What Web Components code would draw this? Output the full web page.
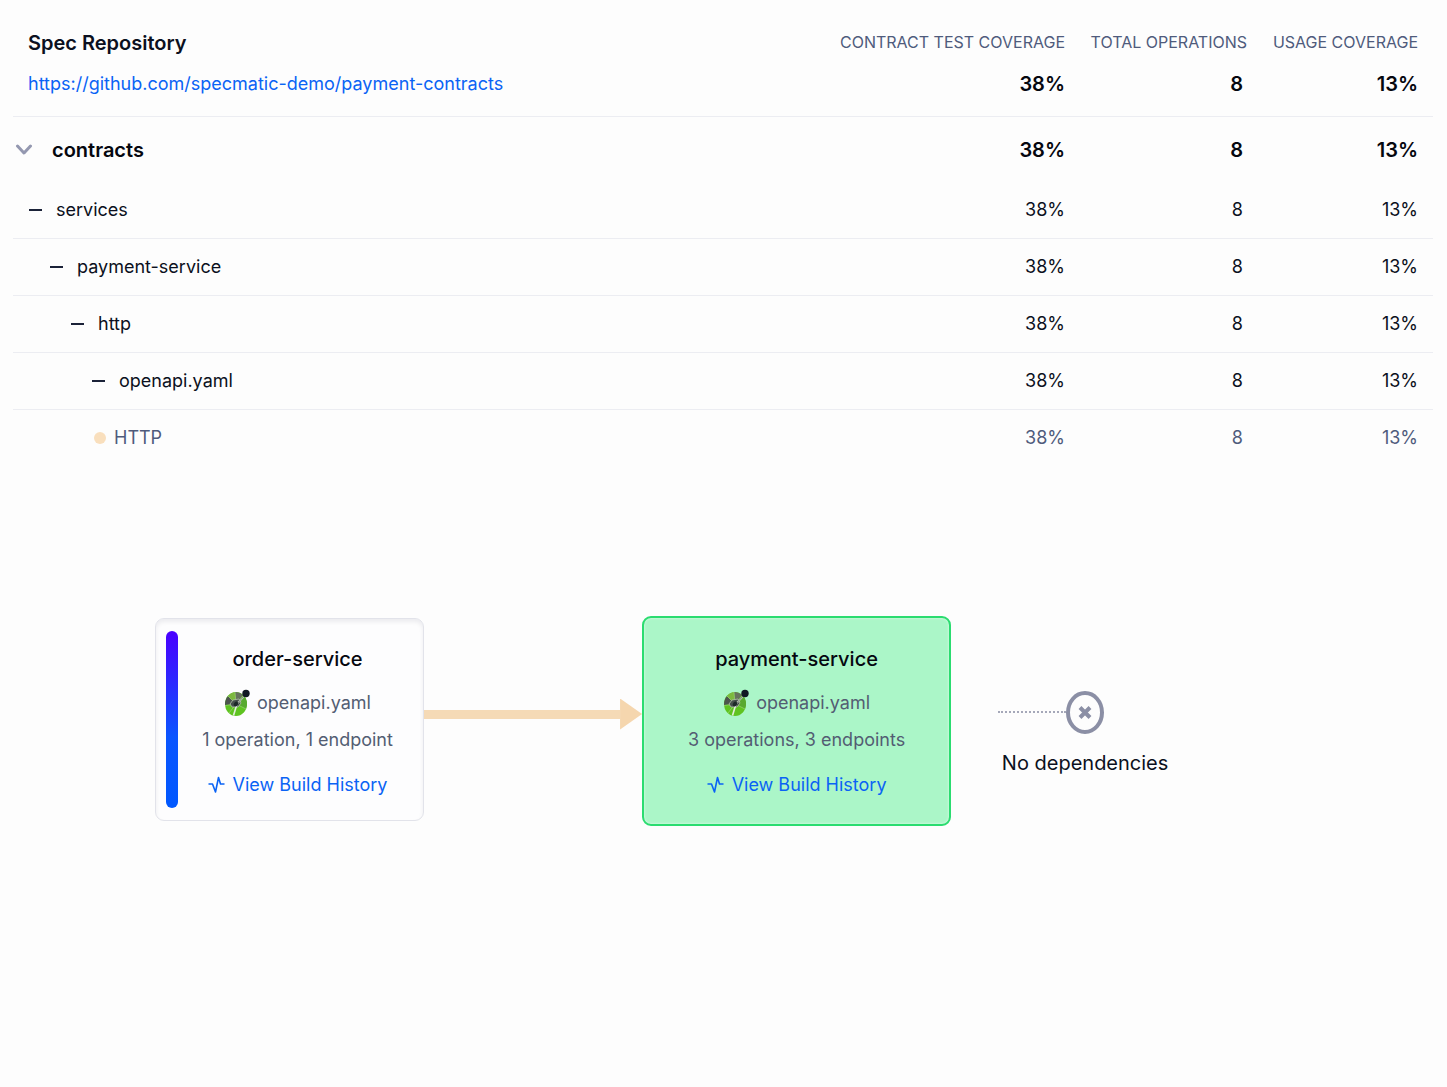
<!DOCTYPE html>
<html lang="en">
<head>
<meta charset="utf-8">
<meta name="viewport" content="width=device-width, initial-scale=1">
<title>Spec Repository</title>
<style>
  body {
    margin: 0;
    background-color: #fdfdfd;
    color: #0b1020;
    font-family: Inter, "Liberation Sans", sans-serif;
    font-size: 18px;
    line-height: 28px;
  }
</style>
</head>
<body>
<coverage-table
  heading="Spec Repository"
  url="https://github.com/specmatic-demo/payment-contracts"
  data-rows='[
    {"name": "contracts", "kind": "root"},
    {"name": "services", "kind": "dir", "level": 0},
    {"name": "payment-service", "kind": "dir", "level": 1},
    {"name": "http", "kind": "dir", "level": 2},
    {"name": "openapi.yaml", "kind": "dir", "level": 3},
    {"name": "HTTP", "kind": "protocol"}
  ]'></coverage-table>

<dependency-graph>
  <service-card accent>
    <span slot="name">order-service</span>
    <span slot="spec">openapi.yaml</span>
    <span slot="summary">1 operation, 1 endpoint</span>
  </service-card>
  <graph-arrow></graph-arrow>
  <service-card selected>
    <span slot="name">payment-service</span>
    <span slot="spec">openapi.yaml</span>
    <span slot="summary">3 operations, 3 endpoints</span>
  </service-card>
  <empty-dependencies>No dependencies</empty-dependencies>
</dependency-graph>

<script>
class CoverageTable extends HTMLElement {
  constructor() {
    super();
    this.attachShadow({ mode: 'open' });
  }

  connectedCallback() {
    this.render(JSON.parse(this.getAttribute('data-rows')));
  }

  marker(row) {
    if (row.kind === 'protocol') return '<span class="dot"></span>';
    if (row.kind === 'root') {
      return `<button type="button" aria-label="Collapse ${row.name}">
        <svg width="18" height="12" viewBox="0 0 18 12"><path d="M2.5 2 9 9 15.500 2" fill="none" stroke="#9498b0" stroke-width="3" stroke-linecap="round" stroke-linejoin="round"/></svg>
      </button>`;
    }
    return `<button type="button" aria-label="Collapse ${row.name}">
      <svg width="13" height="2" viewBox="0 0 13 2"><path d="M0 1h13" stroke="#1b2238" stroke-width="2"/></svg>
    </button>`;
  }

  render(rows) {
    const heading = this.getAttribute('heading');
    const url = this.getAttribute('url');

    this.shadowRoot.innerHTML = `
      <style>
        :host {
          display: block;
          padding: 0 14px 0 13px;
        }
        table {
          width: 100%;
          border-collapse: separate;
          border-spacing: 0;
        }
        th, td {
          box-sizing: border-box;
          height: 57px;
          padding: 0;
          text-align: right;
          font-weight: 400;
          white-space: nowrap;
          border-bottom: 1px solid #ecedf2;
        }
        th:first-child { text-align: left; }
        th:nth-child(2), td:nth-child(2) { width: 222px; }
        th:nth-child(3), td:nth-child(3) { width: 182px; }
        th:nth-child(4), td:nth-child(4) { width: 186px; padding-right: 15px; }
        td:nth-child(3) { padding-right: 4px; }

        .labels th {
          height: 64px;
          padding-top: 20px;
          border: 0;
          color: #4f5b7c;
          font-size: 16px;
        }
        .labels th:first-child {
          padding: 22px 0 0 15px;
          color: #0b1020;
          font-size: 20px;
          font-weight: 600;
        }
        .total th, .total td { height: 53px; padding-bottom: 12px; }
        .total th { padding-left: 15px; }
        .total td, .root th, .root td {
          color: #05070f;
          font-size: 20px;
          font-weight: 600;
        }
        .root th, .root td { height: 65px; border: 0; }
        .protocol th, .protocol td { height: 56px; border: 0; color: #4f5b7c; }

        a { color: #0a63f5; text-decoration: none; }

        .name {
          display: flex;
          align-items: center;
          gap: 14px;
          padding-left: calc(16px + var(--level, 0) * 21px);
        }
        .root .name { padding-left: 2px; gap: 19px; }
        .protocol .name { padding-left: 81px; gap: 8px; }

        button {
          display: flex;
          padding: 0;
          border: 0;
          background: none;
          cursor: pointer;
        }
        svg { display: block; }
        .dot {
          width: 12px;
          height: 12px;
          border-radius: 50%;
          background-color: #f9dfbd;
        }
      </style>
      <table>
        <thead>
          <tr class="labels">
            <th scope="col">${heading}</th>
            <th scope="col">CONTRACT TEST COVERAGE</th>
            <th scope="col">TOTAL OPERATIONS</th>
            <th scope="col">USAGE COVERAGE</th>
          </tr>
        </thead>
        <tbody>
          <tr class="total">
            <th scope="row"><a href="${url}">${url}</a></th>
            <td>38%</td>
            <td>8</td>
            <td>13%</td>
          </tr>
          ${rows.map((row) => `
            <tr class="${row.kind}">
              <th scope="row"><div class="name" style="--level: ${row.level || 0}">${this.marker(row)}<span>${row.name}</span></div></th>
              <td>38%</td>
              <td>8</td>
              <td>13%</td>
            </tr>`).join('')}
        </tbody>
      </table>
    `;
  }
}

class DependencyGraph extends HTMLElement {
  constructor() {
    super();
    this.attachShadow({ mode: 'open' }).innerHTML = `
      <style>
        :host {
          display: grid;
          grid-template-columns: 269px minmax(80px, 1fr) 309px 221px;
          align-items: center;
          margin-top: 150px;
          padding: 0 19% 48px 155px;
        }
      </style>
      <slot></slot>
    `;
  }
}

class ServiceCard extends HTMLElement {
  constructor() {
    super();
    this.attachShadow({ mode: 'open' }).innerHTML = `
      <style>
        :host {
          display: flex;
          box-sizing: border-box;
          margin-bottom: 4px;
          padding: 12px 10px;
          border: 1px solid #e2e3ea;
          border-radius: 9px;
          background-color: #fdfdfe;
          box-shadow: inset 0 3px 4px rgba(20, 20, 40, 0.07);
        }
        :host([selected]) {
          margin-bottom: 0;
          padding: 13px 10px 16px;
          border: 2px solid #2bdc70;
          background-color: #abf6c8;
          box-shadow: inset 0 0 2px 1px #c4f8d8;
        }
        .bar {
          display: none;
          width: 12px;
          border-radius: 6px;
          background: linear-gradient(#4a00ff, #0a55ff 60%, #0058ff);
        }
        :host([accent]) .bar { display: block; }
        .content {
          flex: 1;
          display: flex;
          flex-direction: column;
          align-items: center;
          padding: 14px 0 9px;
          color: #535d73;
        }
        :host([accent]) .content { padding-left: 4px; }
        .name {
          color: #05070f;
          font-size: 20px;
          font-weight: 500;
        }
        .spec {
          display: flex;
          align-items: center;
          gap: 7px;
          margin: 16px 0 9px;
        }
        a {
          display: flex;
          align-items: center;
          gap: 8px;
          margin-top: 17px;
          color: #0a63f5;
          text-decoration: none;
        }
        svg { display: block; }
      </style>
      <div class="bar"></div>
      <div class="content">
        <div class="name"><slot name="name"></slot></div>
        <div class="spec">
          <svg width="26" height="28" viewBox="0 0 26 28" aria-hidden="true">
            <ellipse cx="12" cy="15" rx="11" ry="12" fill="#5fc321"/>
            <path d="M12 15 1 16A11 12 0 0 1 4 7Z" fill="#4c544e"/>
            <path d="M12 15 4 7A11 12 0 0 1 11 3Z" fill="#7cb83f"/>
            <path d="M12 15 11 3A11 12 0 0 1 19 6Z" fill="#66725e"/>
            <path d="M12 15 20 7A11 12 0 0 1 22 20Z" fill="#58a930"/>
            <path d="M1 16.500 12 15 5 24M12 15 22 20M12 15 11 3M12 15 4 7" fill="none" stroke="#a5dc80" stroke-width="0.600"/>
            <path d="M8 18 6 15 9 11 15 10 17 14 14 18Z" fill="#46504c" stroke="#b4c4ac" stroke-width="0.800"/>
            <path d="M22 5 13 15 9.500 26.500" fill="none" stroke="#e4eedd" stroke-width="1.600"/>
            <path d="M22.300 4.500 12.500 15.500" stroke="#46504c" stroke-width="0.800"/>
            <ellipse cx="12" cy="15" rx="2.600" ry="2" transform="rotate(-45 12 15)" fill="#1d2929"/>
            <circle cx="22" cy="4.500" r="3.700" fill="#101923"/>
          </svg>
          <slot name="spec"></slot>
        </div>
        <slot name="summary"></slot>
        <a href="#history">
          <svg width="17" height="18" viewBox="0 0 17 18" aria-hidden="true">
            <path d="M.5 8H4.500L7.500 16 10.500 1.500 12.500 8H16.500" fill="none" stroke="currentColor" stroke-width="1.600" stroke-linejoin="round"/>
          </svg>
          View Build History
        </a>
      </div>
    `;
  }
}

class GraphArrow extends HTMLElement {
  constructor() {
    super();
    this.attachShadow({ mode: 'open' }).innerHTML = `
      <style>
        :host {
          display: flex;
          align-items: center;
          padding-bottom: 14px;
        }
        .line {
          flex: 1;
          height: 9px;
          background-color: #f5dab6;
        }
        .head {
          width: 22px;
          height: 31px;
          background-color: #f5d6ae;
          clip-path: polygon(0 0, 100% 50%, 0 100%);
        }
      </style>
      <div class="line"></div>
      <div class="head"></div>
    `;
  }
}

class EmptyDependencies extends HTMLElement {
  constructor() {
    super();
    this.attachShadow({ mode: 'open' }).innerHTML = `
      <style>
        :host {
          display: block;
          padding: 25px 0 0 47px;
          color: #0b1020;
          font-size: 20px;
          text-align: center;
        }
        .end {
          display: grid;
          grid-template-columns: 1fr auto 1fr;
          align-items: center;
          margin-bottom: 15px;
        }
        .dots { border-top: 2px dotted #a5a8b9; }
        svg { display: block; }
      </style>
      <div class="end">
        <span class="dots"></span>
        <svg width="38" height="43" viewBox="0 0 38 43" aria-hidden="true">
          <ellipse cx="19" cy="21.500" rx="17" ry="19.500" fill="none" stroke="#8b8fa5" stroke-width="4"/>
          <path d="M14 16.500 24 26.500M24 16.500 14 26.500" stroke="#8b8fa5" stroke-width="4"/>
        </svg>
      </div>
      <slot></slot>
    `;
  }
}

customElements.define('coverage-table', CoverageTable);
customElements.define('dependency-graph', DependencyGraph);
customElements.define('service-card', ServiceCard);
customElements.define('graph-arrow', GraphArrow);
customElements.define('empty-dependencies', EmptyDependencies);
</script>
</body>
</html>
